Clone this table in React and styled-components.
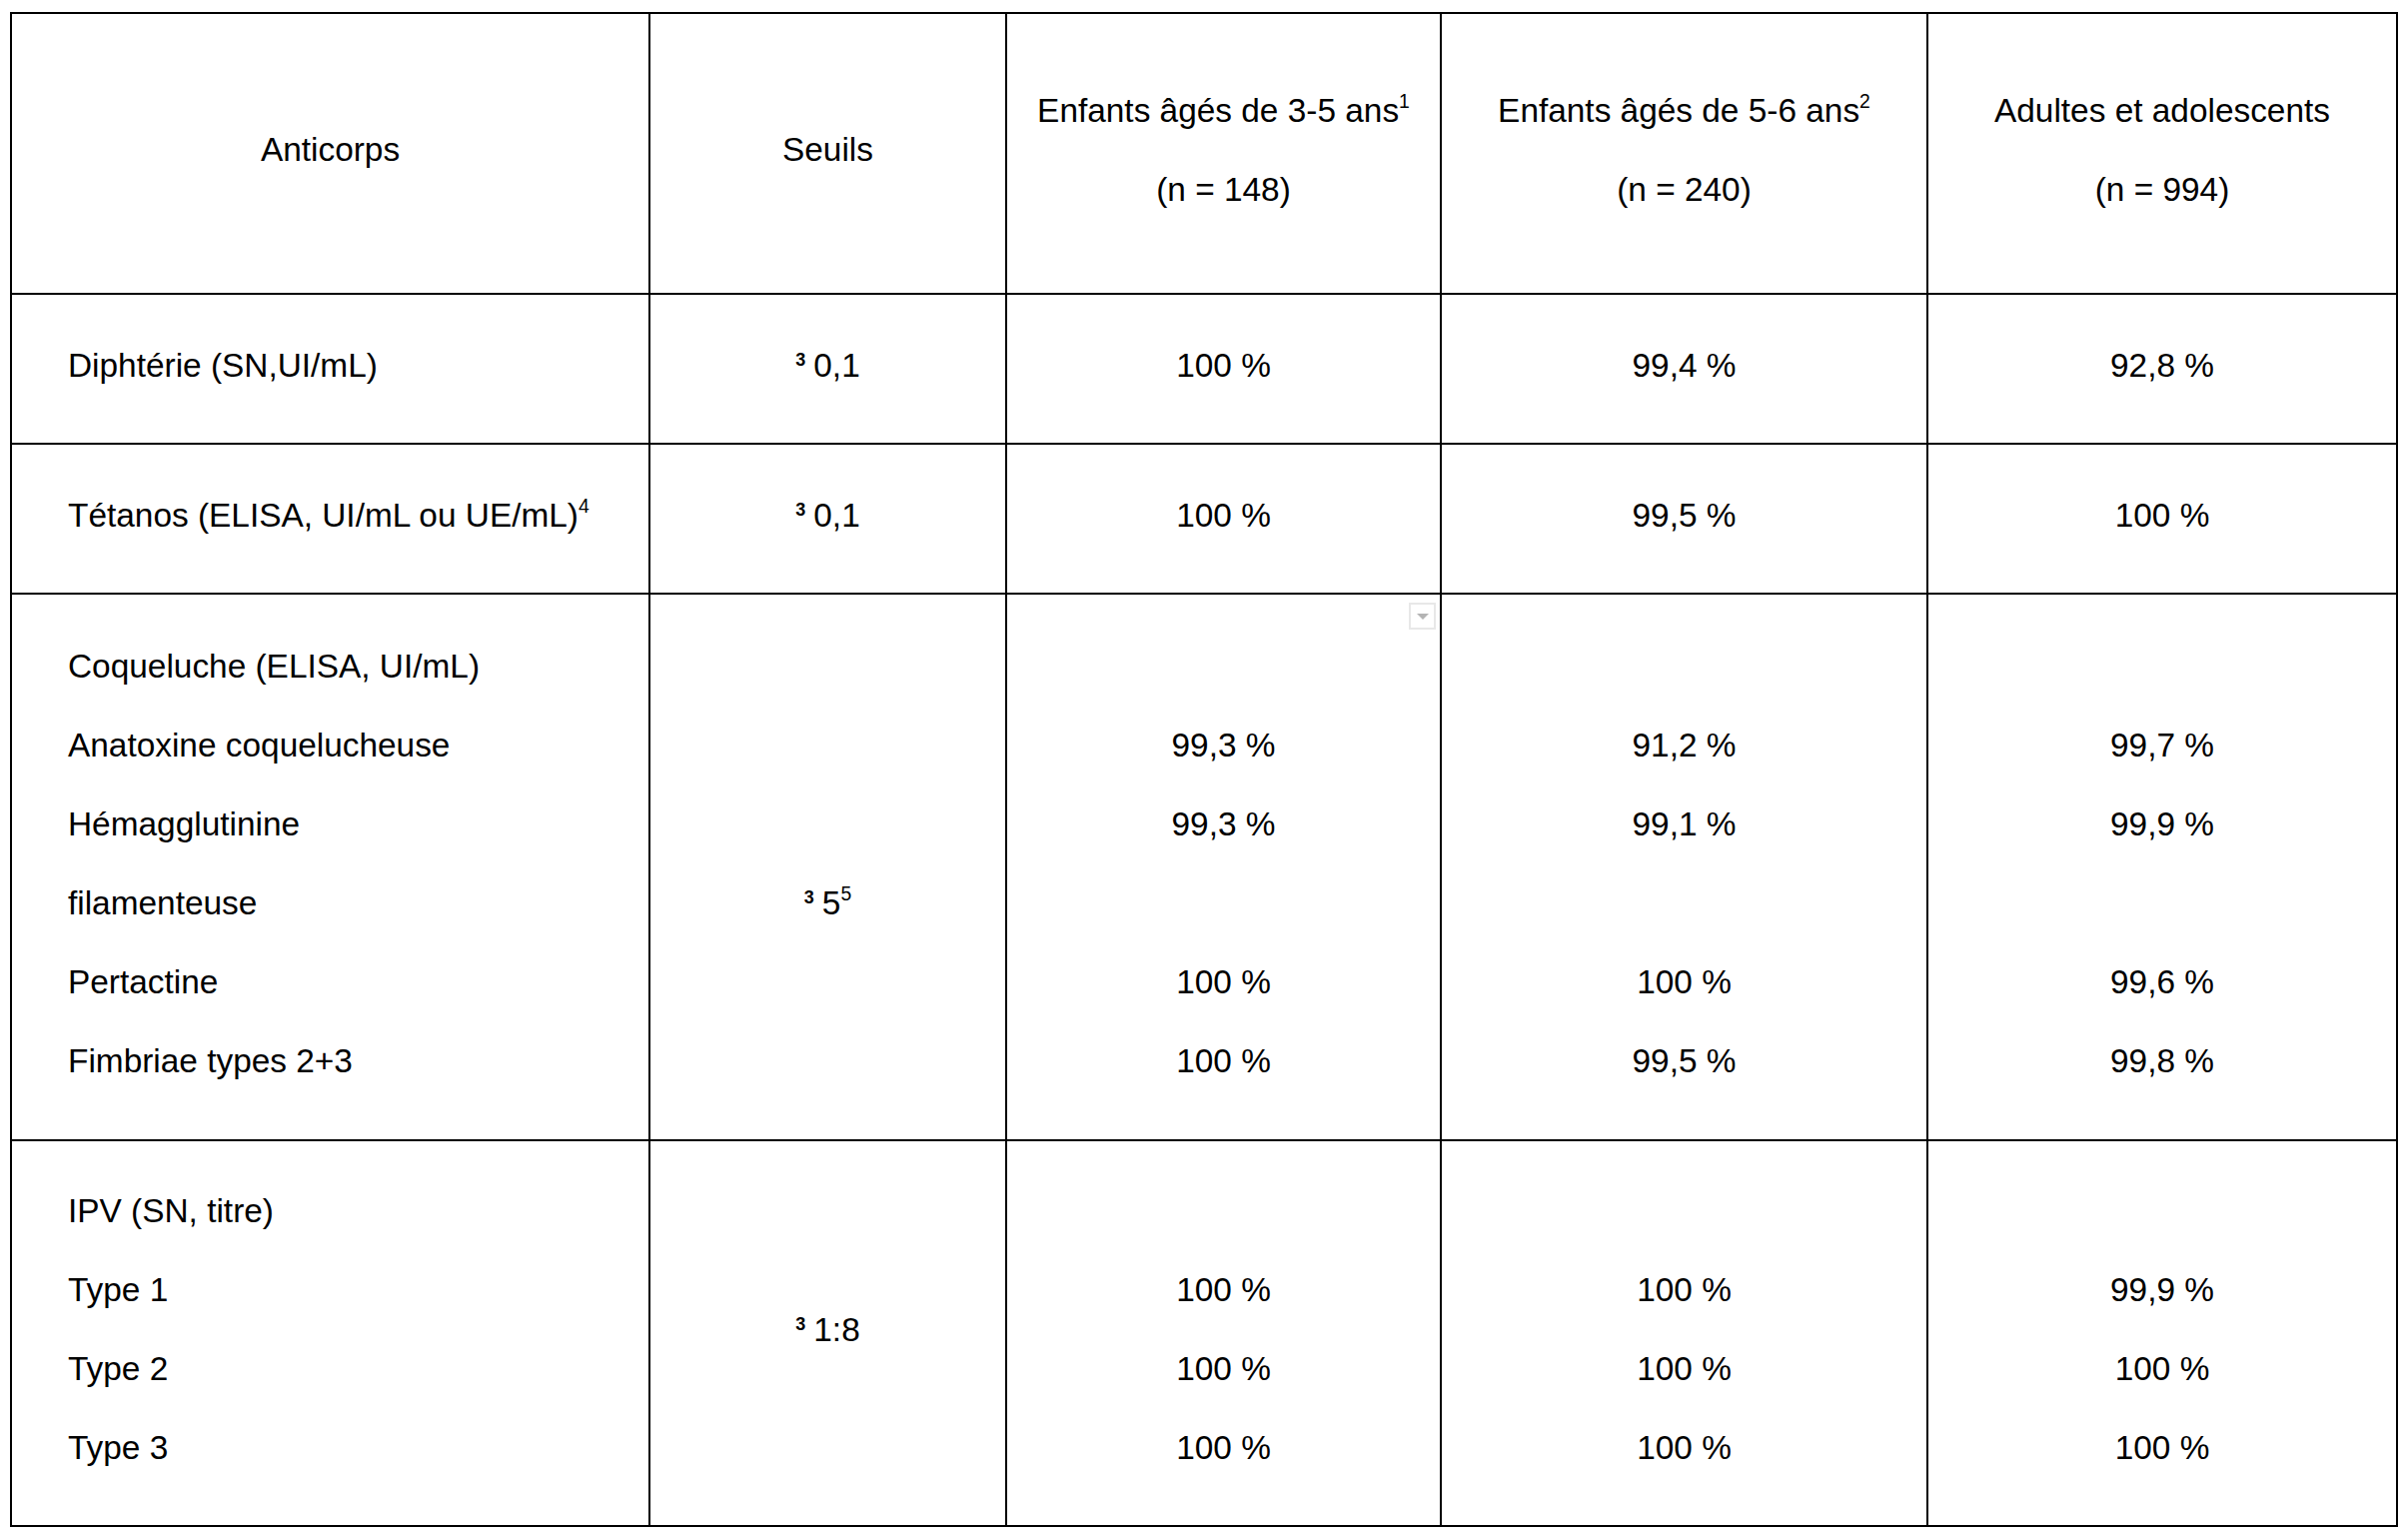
import React from 'react'
import styled, { createGlobalStyle } from 'styled-components'

const GlobalStyle = createGlobalStyle`
	html, body {
		margin: 0;
		padding: 0;
		background: #fff;
	}
	body {
		font-family: 'Liberation Sans', Arial, sans-serif;
		color: #000;
	}
`

const Page = styled.div`
	padding: 12px 0 0 10px;
`

const Table = styled.table`
	border-collapse: separate;
	border-spacing: 0;
	table-layout: fixed;
	width: 2390px;
	border-top: 2px solid #000;
	border-left: 2px solid #000;
	font-size: 33.4px;
`

const Cell = styled.td`
	position: relative;
	box-sizing: border-box;
	width: ${p => p.$w}px;
	height: ${p => p.$h}px;
	border-right: 2px solid #000;
	border-bottom: 2px solid #000;
	padding: 0;
	padding-left: ${p => (p.$left ? '56px' : '0')};
	text-align: ${p => (p.$left ? 'left' : 'center')};
	vertical-align: middle;
	font-weight: normal;
	white-space: nowrap;
`

const Line = styled.div`
	height: 79px;
	line-height: 71px;
`

const Sup = styled.sup`
	font-size: 0.58em;
	line-height: 0;
	vertical-align: 0.72em;
`

const Ge = styled.span`
	font-size: 18px;
	font-weight: bold;
	vertical-align: 11px;
	line-height: 0;
	margin-right: 8px;
`

const DropBox = styled.div`
	position: absolute;
	top: 8px;
	right: 4px;
	width: 27px;
	height: 27px;
	box-sizing: border-box;
	border: 2px solid #e8e8e8;
	background: #fff;
	display: flex;
	align-items: center;
	justify-content: center;
`

const widths = [639, 357, 435, 487, 470]

const Lines = ({ items }) => items.map((t, i) => <Line key={i}>{t}</Line>)

const Seuil = ({ children }) => (
	<>
		<Ge>3</Ge>
		{children}
	</>
)

const rows = [
	{
		h: 150,
		name: ['Diphtérie (SN,UI/mL)'],
		seuil: [<Seuil>0,1</Seuil>],
		a: ['100 %'],
		b: ['99,4 %'],
		c: ['92,8 %'],
	},
	{
		h: 150,
		name: [
			<>
				Tétanos (ELISA, UI/mL ou UE/mL)<Sup>4</Sup>
			</>,
		],
		seuil: [<Seuil>0,1</Seuil>],
		a: ['100 %'],
		b: ['99,5 %'],
		c: ['100 %'],
	},
	{
		h: 547,
		drop: true,
		name: [
			'Coqueluche (ELISA, UI/mL)',
			'Anatoxine coquelucheuse',
			'Hémagglutinine',
			'filamenteuse',
			'Pertactine',
			'Fimbriae types 2+3',
		],
		seuil: [
			'',
			'',
			'',
			<Seuil>
				5<Sup>5</Sup>
			</Seuil>,
			'',
			'',
		],
		a: ['', '99,3 %', '99,3 %', '', '100 %', '100 %'],
		b: ['', '91,2 %', '99,1 %', '', '100 %', '99,5 %'],
		c: ['', '99,7 %', '99,9 %', '', '99,6 %', '99,8 %'],
	},
	{
		h: 386,
		name: ['IPV (SN, titre)', 'Type 1', 'Type 2', 'Type 3'],
		seuil: [<Seuil>1:8</Seuil>],
		a: ['', '100 %', '100 %', '100 %'],
		b: ['', '100 %', '100 %', '100 %'],
		c: ['', '99,9 %', '100 %', '100 %'],
	},
]

const App = () => {
	return (
		<Page>
			<GlobalStyle />
			<Table>
				<thead>
					<tr>
						<Cell as="th" $w={widths[0]} $h={281}>
							<Line>Anticorps</Line>
						</Cell>
						<Cell as="th" $w={widths[1]} $h={281}>
							<Line>Seuils</Line>
						</Cell>
						<Cell as="th" $w={widths[2]} $h={281}>
							<Line>
								Enfants âgés de 3-5 ans<Sup>1</Sup>
							</Line>
							<Line>(n = 148)</Line>
						</Cell>
						<Cell as="th" $w={widths[3]} $h={281}>
							<Line>
								Enfants âgés de 5-6 ans<Sup>2</Sup>
							</Line>
							<Line>(n = 240)</Line>
						</Cell>
						<Cell as="th" $w={widths[4]} $h={281}>
							<Line>Adultes et adolescents</Line>
							<Line>(n = 994)</Line>
						</Cell>
					</tr>
				</thead>
				<tbody>
					{rows.map((r, i) => (
						<tr key={i}>
							<Cell $w={widths[0]} $h={r.h} $left>
								<Lines items={r.name} />
							</Cell>
							<Cell $w={widths[1]} $h={r.h}>
								<Lines items={r.seuil} />
							</Cell>
							<Cell $w={widths[2]} $h={r.h}>
								{r.drop && (
									<DropBox>
										<svg width="14" height="8" viewBox="0 0 14 8">
											<path d="M1 1 L13 1 L7 7 Z" fill="#b4b4b4" />
										</svg>
									</DropBox>
								)}
								<Lines items={r.a} />
							</Cell>
							<Cell $w={widths[3]} $h={r.h}>
								<Lines items={r.b} />
							</Cell>
							<Cell $w={widths[4]} $h={r.h}>
								<Lines items={r.c} />
							</Cell>
						</tr>
					))}
				</tbody>
			</Table>
		</Page>
	)
}

export default App
